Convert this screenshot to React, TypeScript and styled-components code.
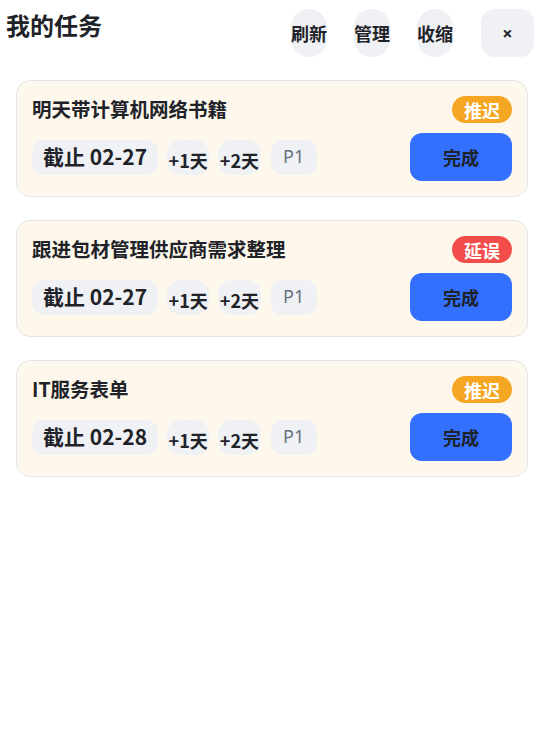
import React from "react";
import styled, { createGlobalStyle } from "styled-components";

const Global = createGlobalStyle`
  html, body { margin: 0; padding: 0; background: #ffffff; }
  body { font-family: "Noto Sans CJK SC", "Noto Sans", sans-serif; color: #1f2329; }
  * { box-sizing: border-box; }
`;

const Page = styled.div`
  padding: 9px 2px 0 6px;
`;

const Header = styled.div`
  display: flex;
  justify-content: space-between;
  align-items: flex-start;
`;

const Title = styled.h1`
  margin: 1px 0 0;
  font-size: 24px;
  line-height: 29px;
  font-weight: 700;
`;

const Actions = styled.div`
  display: flex;
  gap: 27px;
  align-items: center;
`;

const HeaderButton = styled.button`
  height: 48px;
  padding: 0;
  border: none;
  border-radius: 18px;
  background: #eff1f5;
  font-family: inherit;
  font-size: 18px;
  font-weight: 700;
  color: #1f2329;
  line-height: 1;
`;

const CloseButton = styled.button`
  width: 53px;
  height: 48px;
  padding: 0;
  border: none;
  border-radius: 14px;
  background: #eff1f5;
  font-family: "Noto Sans", sans-serif;
  font-size: 18px;
  font-weight: 700;
  color: #1f2329;
  margin-left: 1px;
`;

const List = styled.div`
  display: flex;
  flex-direction: column;
  gap: 23px;
  margin: 23px 6px 0 10px;
`;

const Card = styled.div`
  border: 1px solid #e3e5e9;
  border-radius: 14px;
  background: #fdf8eb;
  padding: 15px;
  display: flex;
  flex-direction: column;
  gap: 10px;
`;

const Row = styled.div`
  display: flex;
  align-items: center;
  justify-content: space-between;
`;

const TaskTitle = styled.div`
  font-size: 19.5px;
  font-weight: 700;
  line-height: 27px;
  margin-top: -2px;
`;

const Badge = styled.span<{ $tone: "orange" | "red" }>`
  height: 27px;
  padding: 0 12px;
  border-radius: 14px;
  background: ${(p) => (p.$tone === "red" ? "#f34d4b" : "#f5a623")};
  color: #ffffff;
  font-size: 18px;
  font-weight: 700;
  display: flex;
  align-items: center;
  line-height: 1;
`;

const Chips = styled.div`
  display: flex;
  align-items: center;
  gap: 9px;
`;

const DateChip = styled.span`
  height: 35px;
  padding: 0 11px 2px;
  border-radius: 12px;
  background: #eff1f5;
  font-size: 21px;
  font-weight: 700;
  display: flex;
  align-items: center;
  line-height: 1;
`;

const DayChip = styled.span`
  height: 35px;
  padding: 5px 1.5px 0;
  border-radius: 14px;
  background: #eff1f5;
  font-size: 18px;
  font-weight: 700;
  display: flex;
  align-items: center;
  line-height: 1;
`;

const PriorityChip = styled.span`
  height: 35px;
  padding: 0 12.5px 3px;
  margin-left: 1px;
  border-radius: 12px;
  background: #eff1f5;
  font-family: "Noto Sans", sans-serif;
  font-size: 18px;
  font-weight: 400;
  color: #6b7280;
  display: flex;
  align-items: center;
  line-height: 1;
`;

const DoneButton = styled.button`
  width: 102px;
  height: 48px;
  border: none;
  border-radius: 12px;
  background: #3370ff;
  color: #1f2329;
  font-family: inherit;
  font-size: 18px;
  font-weight: 700;
  padding: 0;
`;

type Task = { title: string; due: string; status: string; tone: "orange" | "red" };

const tasks: Task[] = [
  { title: "明天带计算机网络书籍", due: "截止 02-27", status: "推迟", tone: "orange" },
  { title: "跟进包材管理供应商需求整理", due: "截止 02-27", status: "延误", tone: "red" },
  { title: "IT服务表单", due: "截止 02-28", status: "推迟", tone: "orange" },
];

export default function App() {
  return (
    <>
      <Global />
      <Page>
        <Header>
          <Title>我的任务</Title>
          <Actions>
            <HeaderButton>刷新</HeaderButton>
            <HeaderButton>管理</HeaderButton>
            <HeaderButton>收缩</HeaderButton>
            <CloseButton>×</CloseButton>
          </Actions>
        </Header>
        <List>
          {tasks.map((t) => (
            <Card key={t.title}>
              <Row>
                <TaskTitle>{t.title}</TaskTitle>
                <Badge $tone={t.tone}>{t.status}</Badge>
              </Row>
              <Row>
                <Chips>
                  <DateChip>{t.due}</DateChip>
                  <DayChip>+1天</DayChip>
                  <DayChip>+2天</DayChip>
                  <PriorityChip>P1</PriorityChip>
                </Chips>
                <DoneButton>完成</DoneButton>
              </Row>
            </Card>
          ))}
        </List>
      </Page>
    </>
  );
}
